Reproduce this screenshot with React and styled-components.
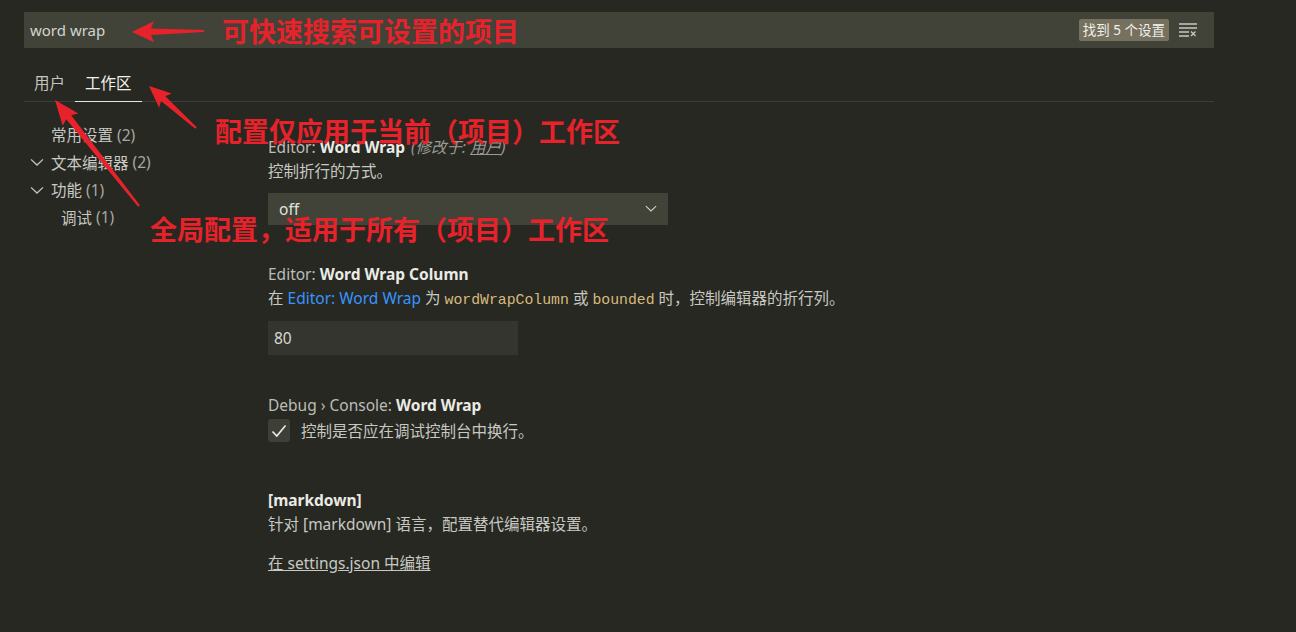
import React from "react";
import styled, { createGlobalStyle } from "styled-components";

const GlobalStyle = createGlobalStyle`
  html, body {
    margin: 0;
    padding: 0;
    background: #272822;
  }
  body {
    font-family: "Noto Sans", "Noto Sans CJK SC", sans-serif;
    color: #cfcfc9;
  }
`;

const Page = styled.div`
  position: relative;
  width: 1296px;
  height: 632px;
  overflow: hidden;
  background: #272822;
`;

const Editor = styled.div`
  width: 1190px;
  margin-left: 24px;
  padding-top: 12px;
`;

const SearchBar = styled.div`
  display: flex;
  align-items: center;
  height: 36px;
  padding: 0 16px 0 6px;
  background: #414339;
  font-size: 15px;
  color: #d4d4cf;
`;

const SearchText = styled.div`
  flex: 1;
`;

const Badge = styled.span`
  padding: 2px 4px;
  border-radius: 2px;
  background: #75715e;
  color: #f0f0ea;
  font-size: 13.5px;
  line-height: 18px;
  margin-right: 10px;
`;

const Tabs = styled.div`
  display: flex;
  height: 38px;
  margin-top: 15px;
  border-bottom: 1px solid #3d3e38;
`;

const Tab = styled.div`
  display: flex;
  align-items: center;
  padding: 0 10px;
  font-size: 15.5px;
  color: ${(p) => (p.$active ? "#f0f0ea" : "#c5c5c0")};
  border-bottom: 1px solid ${(p) => (p.$active ? "#e8e8e2" : "transparent")};
  margin-bottom: -1px;
`;

const Body = styled.div`
  display: flex;
`;

const Toc = styled.div`
  width: 244px;
  padding-top: 19px;
`;

const TocRow = styled.div`
  display: flex;
  align-items: center;
  height: 27.5px;
  padding-left: ${(p) => p.$indent}px;
  font-size: 15.5px;
  color: #c9c9c4;
`;

const Chevron = styled.span`
  display: inline-flex;
  width: 21px;
  margin-left: -21px;
  justify-content: flex-start;
`;

const Count = styled.span`
  color: #a9a9a4;
  margin-left: 4px;
`;

const Content = styled.div`
  padding-top: 33px;
`;

const Setting = styled.div`
  margin-top: ${(p) => p.$top || 0}px;
`;

const Title = styled.div`
  font-size: 15.5px;
  line-height: 24px;
  font-weight: 700;
  color: #ebebe6;
`;

const Category = styled.span`
  font-weight: 400;
  color: #bcbcb7;
`;

const Modified = styled.span`
  font-weight: 400;
  font-style: italic;
  color: #9a9a95;
  margin-left: 6px;
  u {
    text-decoration: underline;
  }
`;

const Desc = styled.div`
  font-size: 15.5px;
  line-height: 24px;
  color: #c8c8c3;
`;

const Link = styled.span`
  color: #3794ff;
`;

const Code = styled.span`
  font-family: "Liberation Mono", monospace;
  font-size: 14.8px;
  color: #d7ba7d;
`;

const Select = styled.div`
  display: flex;
  align-items: center;
  justify-content: space-between;
  width: 400px;
  height: 32px;
  margin-top: 10px;
  padding: 0 11px;
  box-sizing: border-box;
  background: #414339;
  font-size: 15.5px;
  color: #e2e2dd;
`;

const TextInput = styled.div`
  display: flex;
  align-items: center;
  width: 250px;
  height: 34px;
  margin-top: 9px;
  padding: 0 6px;
  box-sizing: border-box;
  background: #34352e;
  font-size: 15.5px;
  color: #d8d8d3;
`;

const CheckRow = styled.div`
  display: flex;
  align-items: center;
  gap: 11px;
  margin-top: 2px;
  font-size: 15.5px;
  color: #c8c8c3;
`;

const CheckBox = styled.div`
  display: flex;
  align-items: center;
  justify-content: center;
  width: 22px;
  height: 23px;
  border-radius: 3px;
  background: #3e3f37;
`;

const EditLink = styled.div`
  margin-top: 15px;
  font-size: 15.5px;
  line-height: 24px;
  color: #c8c8c3;
  text-decoration: underline;
`;

const Overlay = styled.svg`
  position: absolute;
  left: 0;
  top: 0;
  pointer-events: none;
`;

const Note = styled.div`
  position: absolute;
  left: ${(p) => p.$x}px;
  top: ${(p) => p.$y}px;
  font-family: "Noto Sans CJK SC", sans-serif;
  font-size: 27px;
  line-height: 1;
  font-weight: 700;
  color: #e8222b;
  white-space: nowrap;
`;

const arrowPoints = (tip, tail, headLen, headW, neckW, tailW) => {
  const dx = tip[0] - tail[0];
  const dy = tip[1] - tail[1];
  const len = Math.hypot(dx, dy);
  const ux = dx / len;
  const uy = dy / len;
  const nx = -uy;
  const ny = ux;
  const bx = tip[0] - ux * headLen;
  const by = tip[1] - uy * headLen;
  const kx = bx + ux * 3;
  const ky = by + uy * 3;
  const pts = [
    [tip[0], tip[1]],
    [bx + nx * headW, by + ny * headW],
    [kx + nx * neckW, ky + ny * neckW],
    [tail[0] + nx * tailW, tail[1] + ny * tailW],
    [tail[0] - nx * tailW, tail[1] - ny * tailW],
    [kx - nx * neckW, ky - ny * neckW],
    [bx - nx * headW, by - ny * headW],
  ];
  return pts.map((p) => p.map((v) => v.toFixed(1)).join(",")).join(" ");
};

const arrows = [
  { tip: [132, 32], tail: [204, 31], head: 22, w: 10.5 },
  { tip: [149, 86], tail: [196, 128], head: 22, w: 9.5 },
  { tip: [55, 100], tail: [139, 206], head: 25, w: 10 },
];

const ChevronDown = ({ size = 14, color = "#c5c5c0" }) => (
  <svg width={size} height={size * 0.6} viewBox="0 0 14 8" fill="none">
    <path d="M1 1.2 L7 6.8 L13 1.2" stroke={color} strokeWidth="1.3" />
  </svg>
);

const ClearIcon = () => (
  <svg width="19" height="14" viewBox="0 0 19 14" fill="none" stroke="#c8c8c3" strokeWidth="1.3">
    <path d="M0 1h18M0 5h18M0 9h10M0 13h10" />
    <path d="M12 8.5l4.5 4.5M16.5 8.5L12 13" />
  </svg>
);

const CheckMark = () => (
  <svg width="16" height="14" viewBox="0 0 16 14" fill="none">
    <path d="M1.5 7.5 L5.8 12 L14.5 1.5" stroke="#eeeeea" strokeWidth="1.6" />
  </svg>
);

export default function App() {
  return (
    <Page>
      <GlobalStyle />
      <Editor>
        <SearchBar>
          <SearchText>word wrap</SearchText>
          <Badge>找到 5 个设置</Badge>
          <ClearIcon />
        </SearchBar>

        <Tabs>
          <Tab>用户</Tab>
          <Tab $active>工作区</Tab>
        </Tabs>

        <Body>
          <Toc>
            <TocRow $indent={27}>
              常用设置<Count>(2)</Count>
            </TocRow>
            <TocRow $indent={27}>
              <Chevron>
                <ChevronDown />
              </Chevron>
              文本编辑器<Count>(2)</Count>
            </TocRow>
            <TocRow $indent={27}>
              <Chevron>
                <ChevronDown />
              </Chevron>
              功能<Count>(1)</Count>
            </TocRow>
            <TocRow $indent={37}>
              调试<Count>(1)</Count>
            </TocRow>
          </Toc>

          <Content>
            <Setting>
              <Title>
                <Category>Editor: </Category>Word Wrap
                <Modified>
                  (修改于: <u>用户</u>)
                </Modified>
              </Title>
              <Desc>控制折行的方式。</Desc>
              <Select>
                off
                <ChevronDown size={12} color="#d0d0cb" />
              </Select>
            </Setting>

            <Setting $top={37}>
              <Title>
                <Category>Editor: </Category>Word Wrap Column
              </Title>
              <Desc>
                在 <Link>Editor: Word Wrap</Link> 为 <Code>wordWrapColumn</Code> 或{" "}
                <Code>bounded</Code> 时，控制编辑器的折行列。
              </Desc>
              <TextInput>80</TextInput>
            </Setting>

            <Setting $top={38}>
              <Title>
                <Category>Debug › Console: </Category>Word Wrap
              </Title>
              <CheckRow>
                <CheckBox>
                  <CheckMark />
                </CheckBox>
                控制是否应在调试控制台中换行。
              </CheckRow>
            </Setting>

            <Setting $top={46}>
              <Title>[markdown]</Title>
              <Desc>针对 [markdown] 语言，配置替代编辑器设置。</Desc>
              <EditLink>在 settings.json 中编辑</EditLink>
            </Setting>
          </Content>
        </Body>
      </Editor>

      <Overlay width="1296" height="632">
        {arrows.map((a, i) => (
          <polygon key={i} points={arrowPoints(a.tip, a.tail, a.head, a.w, 3.2, 1.1)} fill="#e8222b" />
        ))}
      </Overlay>
      <Note $x={222} $y={17}>可快速搜索可设置的项目</Note>
      <Note $x={215} $y={117}>配置仅应用于当前（项目）工作区</Note>
      <Note $x={150} $y={215}>全局配置，适用于所有（项目）工作区</Note>
    </Page>
  );
}
